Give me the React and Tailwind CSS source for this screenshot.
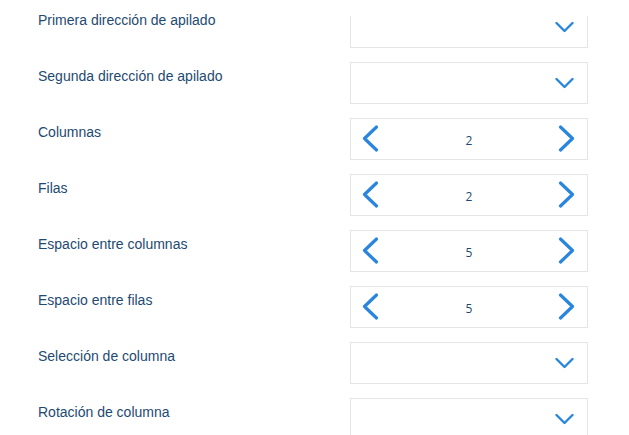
const FIELDS = [
  { label: 'Primera dirección de apilado', type: 'select', faded: true },
  { label: 'Segunda dirección de apilado', type: 'select' },
  { label: 'Columnas', type: 'stepper', value: 2 },
  { label: 'Filas', type: 'stepper', value: 2 },
  { label: 'Espacio entre columnas', type: 'stepper', value: 5 },
  { label: 'Espacio entre filas', type: 'stepper', value: 5 },
  { label: 'Selección de columna', type: 'select' },
  { label: 'Rotación de columna', type: 'select' },
];

const ChevronDown = () => (
  <svg width="20" height="12" viewBox="0 0 20 12" className="shrink-0">
    <polyline points="1.5,2 9.5,10 17.5,2" fill="none" stroke="#2a86dc" strokeWidth="2.4" strokeLinecap="round" strokeLinejoin="round" />
  </svg>
);

const ChevronLeft = () => (
  <svg width="17" height="28" viewBox="0 0 17 28" className="shrink-0">
    <polyline points="14.5,2 2.5,13.5 14.5,25" fill="none" stroke="#2a86dc" strokeWidth="3.2" strokeLinecap="round" strokeLinejoin="round" />
  </svg>
);

const ChevronRight = () => (
  <svg width="17" height="28" viewBox="0 0 17 28" className="shrink-0">
    <polyline points="2.5,2 14.5,13.5 2.5,25" fill="none" stroke="#2a86dc" strokeWidth="3.2" strokeLinecap="round" strokeLinejoin="round" />
  </svg>
);

const Select = ({ faded }) => (
  <div className="relative w-[238px] h-[42px] border border-[#e5e5e5] bg-white flex items-center justify-end pr-[12px]">
    <ChevronDown />
    {/* list is scrolled: top of first box fades out */}
    {faded && <div className="absolute -left-px -right-px -top-px h-[10px] bg-white" />}
  </div>
);

const Stepper = ({ value }) => (
  <div className="w-[238px] h-[42px] border border-[#e5e5e5] bg-white flex items-center justify-between pl-[11px] pr-[12px]">
    <ChevronLeft />
    <span className="text-[12px] text-[#1e4a72] pt-[3px] pl-px font-['Open_Sans',sans-serif]">{value}</span>
    <ChevronRight />
  </div>
);

export default function App() {
  return (
    <div className="w-[629px] h-[435px] overflow-hidden bg-white font-['Liberation_Sans',Arial,sans-serif]">
      <div className="flex flex-col gap-[14px] pt-[6px]">
        {FIELDS.map((f) => (
          <div key={f.label} className="flex items-start">
            <div className="w-[350px] pl-[38px] pt-[6px] text-[14px] leading-[16px] text-[#1e4a72]">
              {f.label}
            </div>
            {f.type === 'select' ? <Select faded={f.faded} /> : <Stepper value={f.value} />}
          </div>
        ))}
      </div>
    </div>
  );
}
